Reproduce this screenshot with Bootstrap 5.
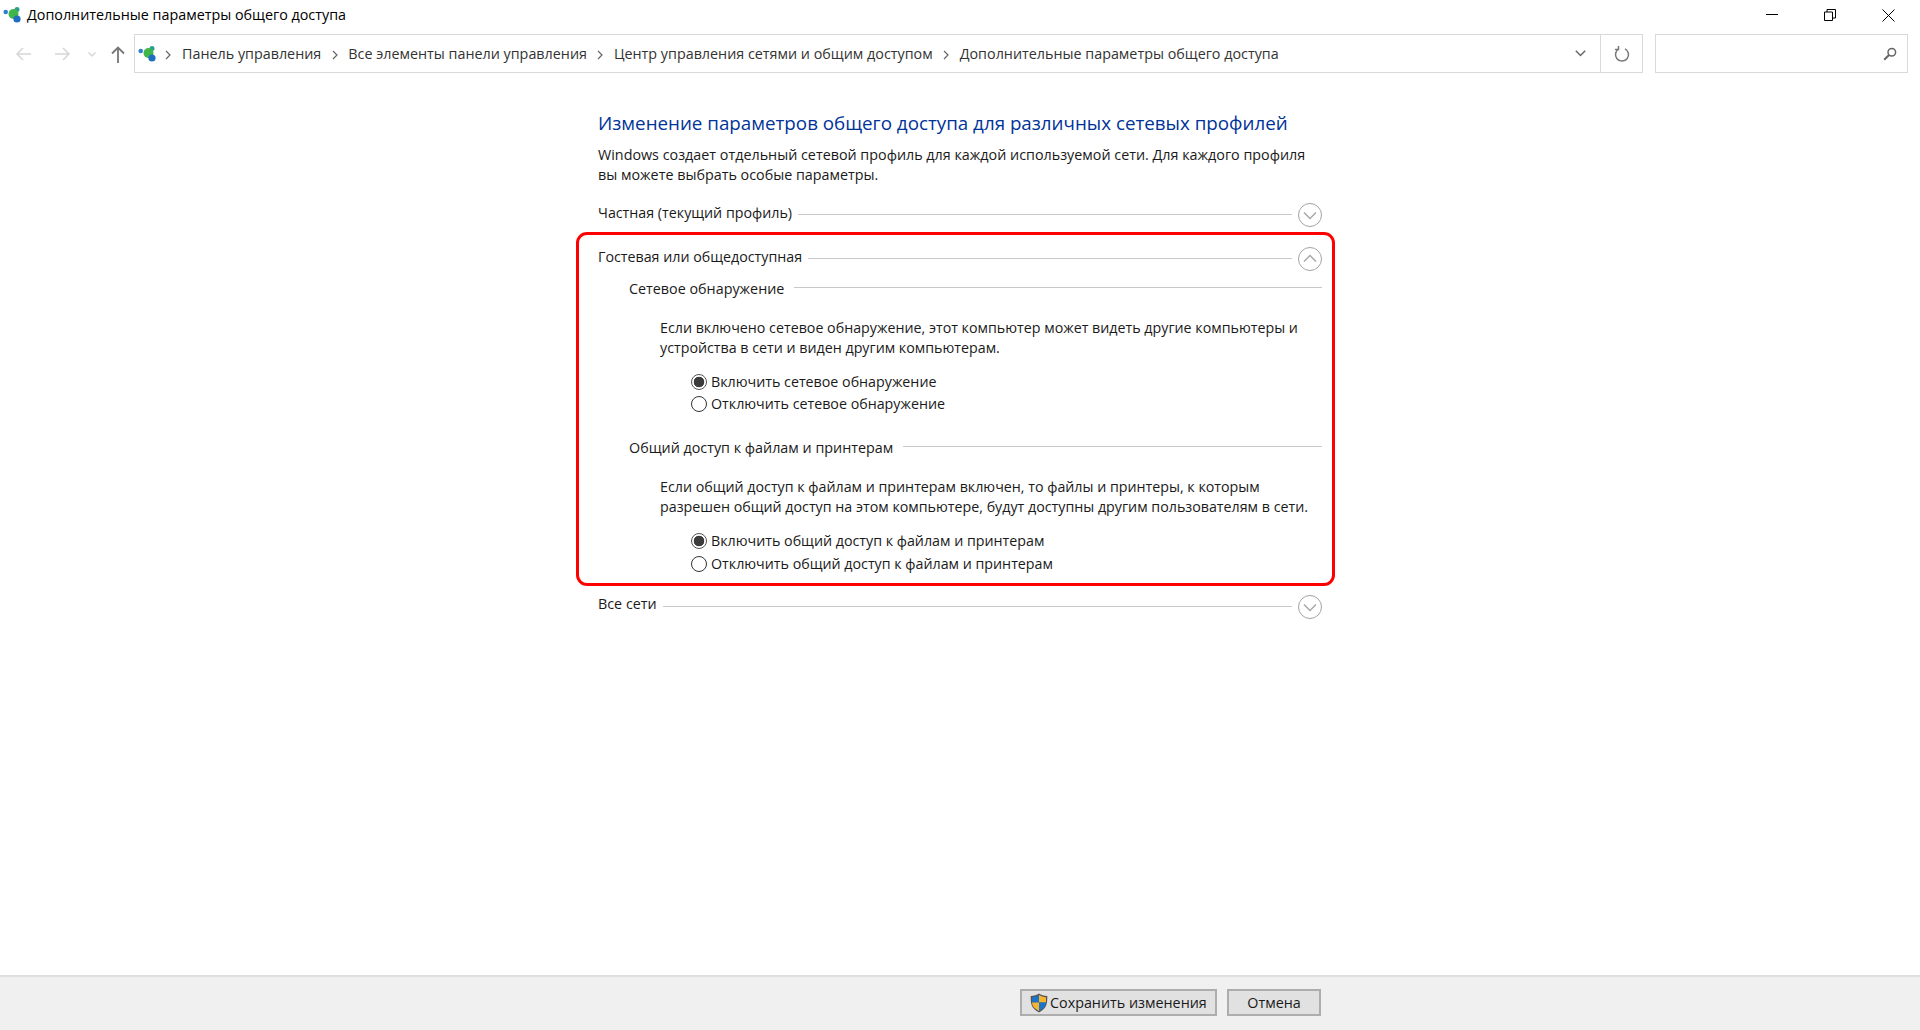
<!doctype html>
<html lang="ru"><head><meta charset="utf-8"><title>Дополнительные параметры общего доступа</title>
<link href="https://cdn.jsdelivr.net/npm/bootstrap@5.3.0/dist/css/bootstrap.min.css" rel="stylesheet">
<style>
html,body{height:100%;overflow:hidden}
body{font-family:"Open Sans","Noto Sans",sans-serif;font-size:14.33px;line-height:20px;color:#1a1a1a;background:#fff}
.wn-title{height:34px;padding-left:3px}
.wn-title-text{margin-left:6px;margin-top:-4px;color:#000}
.wn-ctl{width:58px;height:30px;margin-bottom:4px}
.wn-ctls{padding-right:3px}
.wn-tools{height:39px;padding-right:12px}
.wn-nav{width:134px;flex:none}
.wn-addr{border:1px solid #d9d9d9;height:39px;min-width:0}
.wn-addr-ic{width:29px;padding-left:3px;flex:none}
.wn-crumb{color:#333;white-space:nowrap}
.wn-sep{width:27px;flex:none;text-align:center}
.wn-sep-first{width:8px;margin-right:10px}
.wn-drop{margin-right:14px}
.wn-refresh{width:42px;height:37px;border-left:1px solid #d9d9d9;flex:none}
.wn-search{width:253px;height:39px;margin-left:12px;border:1px solid #d9d9d9;padding-right:10px;flex:none}
.wn-main{padding-left:598px;padding-right:598px}
.wn-col{width:724px}
.wn-head{font-size:18.77px;font-weight:400;line-height:30px;color:#003399;margin:35px 0 7px;white-space:nowrap}
.wn-p{margin:0;white-space:nowrap}
.wn-fine{font-size:14.26px}
.wn-rule{height:1px;background:#c8c8c8;flex:1 1 auto;margin-left:6px}
.wn-sec{height:24px}
.wn-sec-text{margin-bottom:5px;white-space:nowrap}
.wn-sec-rule{margin-bottom:1px}
.wn-round{flex:none;margin-left:6px}
.wn-sec1{margin-top:18px}
.wn-box{border:3px solid #f00;border-radius:11px;margin:5px -13px 0 -22px;padding:12px 10px 8px 19px;height:354px}
.wn-sub{height:20px;padding-left:31px;margin-top:8px}
.wn-sub .wn-rule{margin-left:10px;margin-top:-3px}
.wn-sub-two{margin-top:23px}
.wn-body{padding-left:62px;margin-top:19px}
.wn-radios{padding-left:93px;margin-top:13px}
.wn-radios-two{margin-top:12px}
.wn-radio{height:22px;margin:0;padding:0;gap:4px;min-height:0}
.wn-radio-tall{height:24px}
.wn-radio .form-check-input{float:none;margin:0;width:16px;height:16px;flex:none;border:1px solid #333;background-color:#fff;background-image:none;box-shadow:none}
.wn-radio .form-check-input:checked{border-color:#555;background-color:#fff;background-image:radial-gradient(circle,#3c3c3c 0,#3c3c3c 5px,#fff 5.6px)}
.wn-radio .form-check-label{white-space:nowrap;color:#1a1a1a;opacity:1}
.wn-last{margin-top:8.5px}
.wn-foot{height:55px;background:#f0f0f0;border-top:2px solid #dfdfdf;padding:12px 599px 0 0;flex:none;gap:10px}
.wn-btn{height:27px;padding:0;border:2px solid #adadad;border-radius:0;background:#e1e1e1;color:#1a1a1a;font-size:14.33px;line-height:20px}
.wn-btn-save{width:197px;gap:2px;padding-left:8px}
.wn-btn-cancel{width:94px}
</style></head>
<body class="d-flex flex-column">
<div class="wn-title d-flex align-items-center justify-content-between">
  <div class="d-flex align-items-center">
    <svg width="18" height="16" viewBox="0 0 18 16" class="mb-1"><circle cx="2.7" cy="5" r="2.3" fill="#2f7fd0"/><circle cx="14" cy="2.5" r="2.5" fill="#2a9d8f"/><circle cx="10.5" cy="7" r="5" fill="#3fb54a"/><circle cx="14" cy="12" r="3.6" fill="#1f6fc0"/></svg>
    <span class="wn-title-text">Дополнительные параметры общего доступа</span>
  </div>
  <div class="wn-ctls d-flex">
    <div class="wn-ctl d-flex align-items-center justify-content-center"><svg width="12" height="12" viewBox="0 0 12 12"><path d="M0 5.5h12" stroke="#000" stroke-width="1" fill="none"/></svg></div>
    <div class="wn-ctl d-flex align-items-center justify-content-center"><svg width="12" height="12" viewBox="0 0 12 12"><path d="M.5 3h8v8.500h-8zM3 3V.5h8.500v8.500H8.500" stroke="#000" stroke-width="1" fill="none"/></svg></div>
    <div class="wn-ctl d-flex align-items-center justify-content-center"><svg width="13" height="13" viewBox="0 0 13 13"><path d="M.5 .5l12 12M12.500 .5l-12 12" stroke="#000" stroke-width="1" fill="none"/></svg></div>
  </div>
</div>
<div class="wn-tools d-flex">
  <div class="wn-nav">
    <svg width="134" height="38" viewBox="0 0 134 38">
      <path d="M17 20h14M23 14l-6 6 6 6" stroke="#d6d6d6" stroke-width="1.500" fill="none"/>
      <path d="M55 20h14M63 14l6 6-6 6" stroke="#d6d6d6" stroke-width="1.500" fill="none"/>
      <path d="M88.500 18.500l3.500 3.500 3.500-3.500" stroke="#d6d6d6" stroke-width="1.500" fill="none"/>
      <path d="M118 29V14M112 19.500l6-6 6 6" stroke="#777" stroke-width="1.800" fill="none"/>
    </svg>
  </div>
  <div class="wn-addr d-flex align-items-center flex-grow-1">
    <div class="wn-addr-ic d-flex align-items-center"><svg width="18" height="16" viewBox="0 0 18 16"><circle cx="2.700" cy="5" r="2.300" fill="#2f7fd0"/><circle cx="14" cy="2.500" r="2.500" fill="#2a9d8f"/><circle cx="10.500" cy="7" r="5" fill="#3fb54a"/><circle cx="14" cy="12" r="3.600" fill="#1f6fc0"/></svg></div>
    <div class="d-flex align-items-center flex-grow-1">
      <span class="wn-sep wn-sep-first"><svg width="6" height="10" viewBox="0 0 6 10"><path d="M1 1l4 4-4 4" stroke="#666" stroke-width="1.200" fill="none"/></svg></span>
      <span class="wn-crumb">Панель управления</span>
      <span class="wn-sep"><svg width="6" height="10" viewBox="0 0 6 10"><path d="M1 1l4 4-4 4" stroke="#666" stroke-width="1.200" fill="none"/></svg></span>
      <span class="wn-crumb">Все элементы панели управления</span>
      <span class="wn-sep"><svg width="6" height="10" viewBox="0 0 6 10"><path d="M1 1l4 4-4 4" stroke="#666" stroke-width="1.200" fill="none"/></svg></span>
      <span class="wn-crumb">Центр управления сетями и общим доступом</span>
      <span class="wn-sep"><svg width="6" height="10" viewBox="0 0 6 10"><path d="M1 1l4 4-4 4" stroke="#666" stroke-width="1.200" fill="none"/></svg></span>
      <span class="wn-crumb">Дополнительные параметры общего доступа</span>
      <span class="ms-auto wn-drop d-flex"><svg width="11" height="7" viewBox="0 0 11 7"><path d="M.8 .8L5.500 5.500 10.200 .8" stroke="#666" stroke-width="1.500" fill="none"/></svg></span>
    </div>
    <div class="wn-refresh d-flex align-items-center justify-content-center"><svg width="16" height="17" viewBox="0 0 16 17"><path d="M5 3.300a6.500 6.500 0 1 0 6 0M4.500 .5v3.500H1" transform="translate(0 .5)" stroke="#777" stroke-width="1.500" fill="none"/></svg></div>
  </div>
  <div class="wn-search d-flex align-items-center justify-content-end"><svg width="14" height="14" viewBox="0 0 14 14"><circle cx="8.800" cy="5.200" r="3.800" stroke="#666" stroke-width="1.500" fill="none"/><path d="M6 8l-4.800 4.800" stroke="#666" stroke-width="2" fill="none"/></svg></div>
</div>
<main class="wn-main flex-grow-1">
  <div class="wn-col">
    <h1 class="wn-head">Изменение параметров общего доступа для различных сетевых профилей</h1>
    <p class="wn-p">Windows создает отдельный сетевой профиль для каждой используемой сети. Для каждого профиля<br>вы можете выбрать особые параметры.</p>
    <div class="wn-sec wn-sec1 d-flex align-items-center">
      <span class="wn-sec-text wn-fine">Частная (текущий профиль)</span><span class="wn-rule wn-sec-rule"></span>
      <svg class="wn-round" width="24" height="24" viewBox="0 0 24 24"><circle cx="12" cy="12" r="11.500" stroke="#a3a3a3" fill="#fff"/><path d="M6 9.500l6 6 6-6" stroke="#a8a8a8" stroke-width="1.500" fill="none"/></svg>
    </div>
    <section class="wn-box">
      <div class="wn-sec d-flex align-items-center">
        <span class="wn-sec-text wn-fine">Гостевая или общедоступная</span><span class="wn-rule wn-sec-rule"></span>
        <svg class="wn-round" width="24" height="24" viewBox="0 0 24 24"><circle cx="12" cy="12" r="11.500" stroke="#a3a3a3" fill="#fff"/><path d="M6 14.500l6-6 6 6" stroke="#a8a8a8" stroke-width="1.500" fill="none"/></svg>
      </div>
      <div class="wn-sub d-flex align-items-center">
        <span class="text-nowrap">Сетевое обнаружение</span><span class="wn-rule"></span>
      </div>
      <p class="wn-p wn-body wn-fine">Если включено сетевое обнаружение, этот компьютер может видеть другие компьютеры и<br>устройства в сети и виден другим компьютерам.</p>
      <div class="wn-radios wn-fine">
        <div class="form-check wn-radio d-flex align-items-center"><input class="form-check-input" type="radio" name="nd" id="nd1" checked><label class="form-check-label" for="nd1">Включить сетевое обнаружение</label></div>
        <div class="form-check wn-radio d-flex align-items-center"><input class="form-check-input" type="radio" name="nd" id="nd2"><label class="form-check-label" for="nd2">Отключить сетевое обнаружение</label></div>
      </div>
      <div class="wn-sub wn-sub-two d-flex align-items-center">
        <span class="text-nowrap">Общий доступ к файлам и принтерам</span><span class="wn-rule"></span>
      </div>
      <p class="wn-p wn-body wn-fine">Если общий доступ к файлам и принтерам включен, то файлы и принтеры, к которым<br>разрешен общий доступ на этом компьютере, будут доступны другим пользователям в сети.</p>
      <div class="wn-radios wn-radios-two wn-fine">
        <div class="form-check wn-radio wn-radio-tall d-flex align-items-center"><input class="form-check-input" type="radio" name="fs" id="fs1" checked><label class="form-check-label" for="fs1">Включить общий доступ к файлам и принтерам</label></div>
        <div class="form-check wn-radio d-flex align-items-center"><input class="form-check-input" type="radio" name="fs" id="fs2"><label class="form-check-label" for="fs2">Отключить общий доступ к файлам и принтерам</label></div>
      </div>
    </section>
    <div class="wn-sec wn-last d-flex align-items-center">
      <span class="wn-sec-text">Все сети</span><span class="wn-rule"></span>
      <svg class="wn-round" width="24" height="24" viewBox="0 0 24 24"><circle cx="12" cy="12" r="11.500" stroke="#a3a3a3" fill="#fff"/><path d="M6 9.500l6 6 6-6" stroke="#a8a8a8" stroke-width="1.500" fill="none"/></svg>
    </div>
  </div>
</main>
<footer class="wn-foot d-flex justify-content-end">
  <button type="button" class="btn wn-btn wn-btn-save d-flex align-items-center">
    <svg width="18" height="20" viewBox="0 0 18 20"><path d="M9 .5C7 2 4 3 .7 3c0 7 0 12 8.300 16.500C17.300 15 17.300 10 17.300 3 14 3 11 2 9 .5z" fill="#555"/><path d="M9 2C7 3.200 4.500 4 2 4.200V9.500h7z" fill="#1b74c9"/><path d="M9 2c2 1.200 4.500 2 7 2.200V9.500H9z" fill="#f6b530"/><path d="M2 9.500c.2 3.600 2.200 6 7 8.500V9.500z" fill="#f6b530"/><path d="M16 9.500c-.2 3.600-2.200 6-7 8.500V9.500z" fill="#1b74c9"/></svg>
    <span>Сохранить изменения</span>
  </button>
  <button type="button" class="btn wn-btn wn-btn-cancel">Отмена</button>
</footer>
</body></html>
